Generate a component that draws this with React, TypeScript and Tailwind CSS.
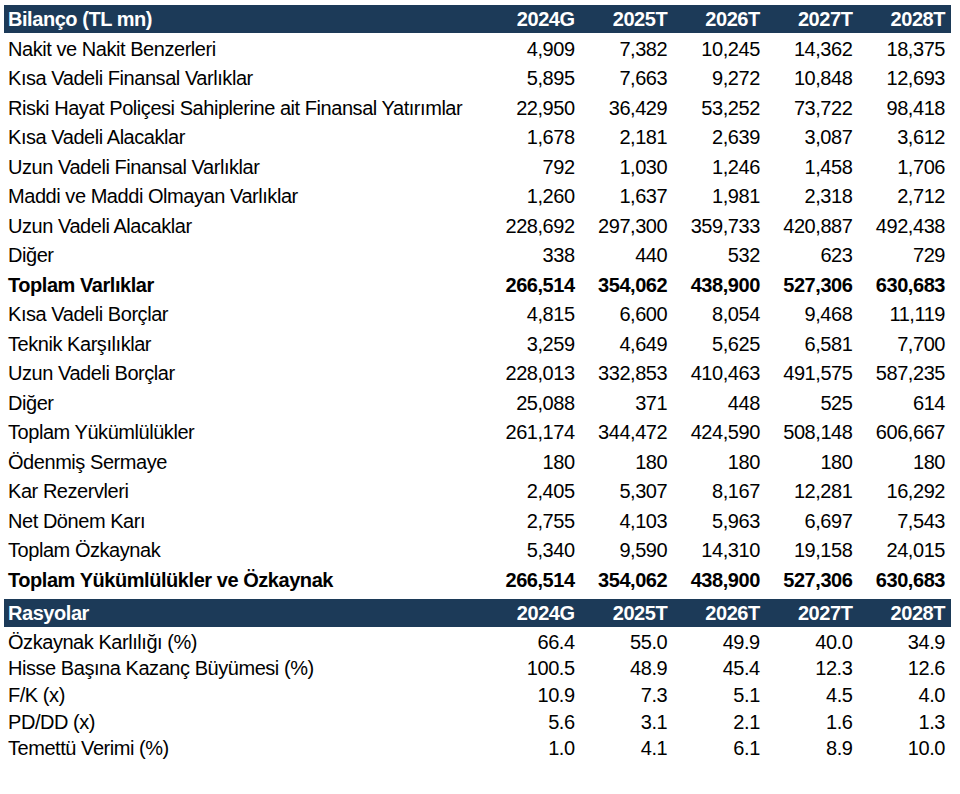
import React from 'react';

type Row = { label: string; values: string[]; bold?: boolean };

const years = ['2024G', '2025T', '2026T', '2027T', '2028T'];

const balance: Row[] = [
  { label: 'Nakit ve Nakit Benzerleri', values: ['4,909', '7,382', '10,245', '14,362', '18,375'] },
  { label: 'Kısa Vadeli Finansal Varlıklar', values: ['5,895', '7,663', '9,272', '10,848', '12,693'] },
  { label: 'Riski Hayat Poliçesi Sahiplerine ait Finansal Yatırımlar', values: ['22,950', '36,429', '53,252', '73,722', '98,418'] },
  { label: 'Kısa Vadeli Alacaklar', values: ['1,678', '2,181', '2,639', '3,087', '3,612'] },
  { label: 'Uzun Vadeli Finansal Varlıklar', values: ['792', '1,030', '1,246', '1,458', '1,706'] },
  { label: 'Maddi ve Maddi Olmayan Varlıklar', values: ['1,260', '1,637', '1,981', '2,318', '2,712'] },
  { label: 'Uzun Vadeli Alacaklar', values: ['228,692', '297,300', '359,733', '420,887', '492,438'] },
  { label: 'Diğer', values: ['338', '440', '532', '623', '729'] },
  { label: 'Toplam Varlıklar', values: ['266,514', '354,062', '438,900', '527,306', '630,683'], bold: true },
  { label: 'Kısa Vadeli Borçlar', values: ['4,815', '6,600', '8,054', '9,468', '11,119'] },
  { label: 'Teknik Karşılıklar', values: ['3,259', '4,649', '5,625', '6,581', '7,700'] },
  { label: 'Uzun Vadeli Borçlar', values: ['228,013', '332,853', '410,463', '491,575', '587,235'] },
  { label: 'Diğer', values: ['25,088', '371', '448', '525', '614'] },
  { label: 'Toplam Yükümlülükler', values: ['261,174', '344,472', '424,590', '508,148', '606,667'] },
  { label: 'Ödenmiş Sermaye', values: ['180', '180', '180', '180', '180'] },
  { label: 'Kar Rezervleri', values: ['2,405', '5,307', '8,167', '12,281', '16,292'] },
  { label: 'Net Dönem Karı', values: ['2,755', '4,103', '5,963', '6,697', '7,543'] },
  { label: 'Toplam Özkaynak', values: ['5,340', '9,590', '14,310', '19,158', '24,015'] },
  { label: 'Toplam Yükümlülükler ve Özkaynak', values: ['266,514', '354,062', '438,900', '527,306', '630,683'], bold: true },
];

const ratios: Row[] = [
  { label: 'Özkaynak Karlılığı (%)', values: ['66.4', '55.0', '49.9', '40.0', '34.9'] },
  { label: 'Hisse Başına Kazanç Büyümesi (%)', values: ['100.5', '48.9', '45.4', '12.3', '12.6'] },
  { label: 'F/K (x)', values: ['10.9', '7.3', '5.1', '4.5', '4.0'] },
  { label: 'PD/DD (x)', values: ['5.6', '3.1', '2.1', '1.6', '1.3'] },
  { label: 'Temettü Verimi (%)', values: ['1.0', '4.1', '6.1', '8.9', '10.0'] },
];

function HeaderRow(props: { title: string }) {
  return (
    <div className="grid grid-cols-[1fr_repeat(5,92.6px)] h-[28px] items-center bg-[#1c3a58] text-white font-bold">
      <p className="pl-[4px]">{props.title}</p>
      {years.map((y) => (
        <p key={y} className="text-right pr-[6px]">
          {y}
        </p>
      ))}
    </div>
  );
}

function DataRow(props: { row: Row; className: string }) {
  return (
    <div className={`grid grid-cols-[1fr_repeat(5,92.6px)] items-center text-black ` + props.className}>
      <p className={`pl-[4px] ${props.row.bold ? 'font-bold' : ''}`}>{props.row.label}</p>
      {props.row.values.map((v, i) => (
        <p key={i} className={`text-right pr-[6px] ${props.row.bold ? 'font-bold' : ''}`}>
          {v}
        </p>
      ))}
    </div>
  );
}

export default function App() {
  return (
    <div className="w-[960px] h-[794px] bg-white pt-[5px] pl-[4px] font-['Liberation_Sans',Arial,sans-serif] text-[20px] leading-none tracking-[-0.45px]">
      <div className="w-[947px] flex flex-col">
        <HeaderRow title="Bilanço (TL mn)" />
        <div className="h-[1px]" />
        {balance.map((r, i) => (
          <DataRow key={i} row={r} className="h-[29.5px]" />
        ))}
        <div className="h-[4px]" />
        <HeaderRow title="Rasyolar" />
        <div className="h-[2px]" />
        {ratios.map((r, i) => (
          <DataRow key={i} row={r} className="h-[26.6px]" />
        ))}
      </div>
    </div>
  );
}
